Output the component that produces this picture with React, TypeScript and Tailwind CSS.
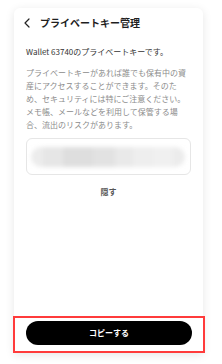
import React from "react";

export default function App() {
  const font = { fontFamily: '"Noto Sans CJK JP", "Noto Sans", sans-serif' };
  return (
    <div className="w-[222px] h-[364px] bg-white overflow-hidden" style={font}>
      <div className="ml-[14px] mt-[8px] w-[189px] h-[345px] bg-white rounded-t-[6px] shadow-[0_2px_10px_rgba(0,0,0,0.10)] flex flex-col">
        <div className="h-[30px] flex items-center pl-[10px]">
          <svg width="6" height="10" viewBox="0 0 6 10" className="shrink-0">
            <polyline points="5,1 1,5 5,9" fill="none" stroke="#222" strokeWidth="1.2" strokeLinecap="round" strokeLinejoin="round" />
          </svg>
          <span className="ml-[10px] text-[10px] leading-[14px] font-bold text-[#1f1f1f]">プライベートキー管理</span>
        </div>
        <div className="px-[12px]">
          <p className="mt-[7px] text-[8px] leading-[13px] text-[#333] whitespace-nowrap">Wallet 63740のプライベートキーです。</p>
          <p className="mt-[8px] text-[8px] leading-[13px] text-[#8c8c8c] whitespace-nowrap">
            <span className="block">プライベートキーがあれば誰でも保有中の資</span>
            <span className="block">産にアクセスすることができます。そのた</span>
            <span className="block">め、セキュリティには特にご注意ください。</span>
            <span className="block">メモ帳、メールなどを利用して保管する場</span>
            <span className="block">合、流出のリスクがあります。</span>
          </p>
          <div className="mt-[7px] h-[37px] rounded-[6px] border border-[#e6e6e6] flex items-center px-[4px] overflow-hidden">
            <div className="flex w-full h-[20px] blur-[2px]">
              <div className="w-[12px] bg-[#ececec] rounded-l-full" />
              <div className="w-[20px] bg-[#e6e6e6]" />
              <div className="w-[30px] bg-[#dedede]" />
              <div className="w-[22px] bg-[#e2e2e2]" />
              <div className="w-[18px] bg-[#e9e9e9]" />
              <div className="w-[20px] bg-[#eeeeee]" />
              <div className="w-[20px] bg-[#f0f0f0]" />
              <div className="w-[12px] bg-[#ececec] rounded-r-full" />
            </div>
          </div>
          <p className="mt-[10px] text-center text-[8px] leading-[13px] font-bold text-[#555]">隠す</p>
        </div>
        <div className="flex-1" />
        <div className="-ml-[1px] -mr-[2px] border-2 border-[#ff3b3b] pt-[3px] pb-[6px] px-[11px]">
          <button className="w-full h-[24px] rounded-full bg-black text-white text-[8px] font-bold flex items-center justify-center">
            コピーする
          </button>
        </div>
      </div>
    </div>
  );
}
